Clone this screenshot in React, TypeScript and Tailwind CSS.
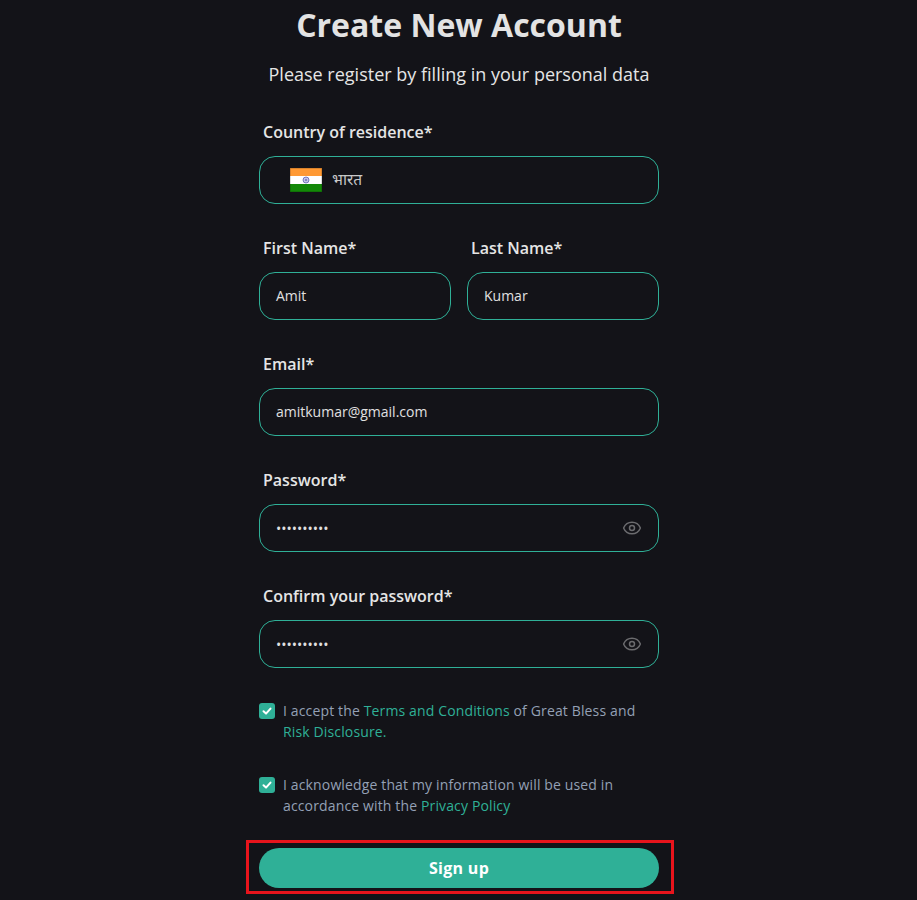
import { Eye } from 'lucide-react'

function Label({ children }: { children: string }) {
  return <label className="block h-6 pl-1 mb-3 text-base leading-6 font-semibold text-[#e5e5e5]">{children}</label>
}

function Input({ value, password }: { value: string; password?: boolean }) {
  return (
    <div className="flex items-center justify-between h-12 rounded-2xl border border-[#2fb097] pl-4 pr-4 text-sm text-[#e0e0e0]">
      <span className={password ? 'pt-px' : ''}>{value}</span>
      {password && <Eye size={20} strokeWidth={1.8} className="text-[#6b6b6e]" />}
    </div>
  )
}

function IndiaFlag() {
  return (
    <svg width="32" height="24" viewBox="0 0 32 24">
      <rect width="32" height="8" fill="#ff9933" />
      <rect y="8" width="32" height="8" fill="#ffffff" />
      <rect y="16" width="32" height="8" fill="#138808" />
      <rect x="0.25" y="0.25" width="31.5" height="23.5" fill="none" stroke="#000" strokeOpacity="0.3" strokeWidth="0.5" />
      <circle cx="16" cy="12" r="3" fill="#c4c4e8" stroke="#3a3a9e" strokeWidth="0.6" />
      <circle cx="16" cy="12" r="0.8" fill="#3a3a9e" />
    </svg>
  )
}

function Check({ children }: { children: React.ReactNode }) {
  return (
    <div className="flex gap-2 text-sm leading-[21px] tracking-[0.14px] text-[#94a0b5]">
      <div className="flex items-center justify-center shrink-0 w-4 h-4 mt-[3px] rounded-[3px] bg-[#2fb097]">
        <svg width="12" height="12" viewBox="0 0 12 12" fill="none" stroke="#fff" strokeWidth="2" strokeLinecap="round" strokeLinejoin="round">
          <path d="M2.5 6.3 L5 8.6 L9.5 3.6" />
        </svg>
      </div>
      <p>{children}</p>
    </div>
  )
}

export default function App() {
  return (
    <div className="h-[900px] overflow-hidden bg-[#131318] font-['Open_Sans','Noto_Sans',sans-serif]">
      <div className="w-[400px] ml-[259px]">
        <h1 className="h-[50px] -mx-8 text-center text-[32px] leading-[50px] font-bold text-[#e3e3e3]">Create New Account</h1>
        <p className="mt-3 h-6 mb-[34px] text-center text-lg leading-6 text-[#e5e5e5]">Please register by filling in your personal data</p>

        <div className="mb-8">
          <Label>Country of residence*</Label>
          <div className="flex items-center gap-[10px] h-12 rounded-2xl border border-[#2fb097] pl-[30px] text-[15.5px] text-[#c9c9c9]">
            <IndiaFlag />
            <span>भारत</span>
          </div>
        </div>

        <div className="grid grid-cols-2 gap-4 mb-8">
          <div>
            <Label>First Name*</Label>
            <Input value="Amit" />
          </div>
          <div>
            <Label>Last Name*</Label>
            <Input value="Kumar" />
          </div>
        </div>

        <div className="mb-8">
          <Label>Email*</Label>
          <Input value="amitkumar@gmail.com" />
        </div>

        <div className="mb-8">
          <Label>Password*</Label>
          <Input value="••••••••••" password />
        </div>

        <div className="mb-8">
          <Label>Confirm your password*</Label>
          <Input value="••••••••••" password />
        </div>

        <div className="mb-8">
          <Check>
            I accept the <a className="text-[#2fb097]">Terms and Conditions</a> of Great Bless and <a className="text-[#2fb097]">Risk Disclosure.</a>
          </Check>
        </div>

        <Check>
          I acknowledge that my information will be used in accordance with the <a className="text-[#2fb097]">Privacy Policy</a>
        </Check>

        <div className="mt-6 -ml-[13px] -mr-[15px] border-[3px] border-[#e8141c] pl-[10px] pr-[12px] pt-[5px] pb-[3px]">
          <button className="block w-full h-10 rounded-full bg-[#2fb097] text-base tracking-[0.3px] font-bold text-white">Sign up</button>
        </div>
      </div>
    </div>
  )
}
